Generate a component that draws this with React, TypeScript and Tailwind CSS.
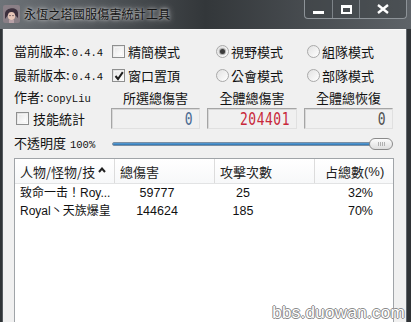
import React from 'react';

const cjk = "font-['Noto_Sans_CJK_TC','Noto_Sans_CJK_SC',sans-serif]";
const mono = "font-['Liberation_Mono',monospace]";

function Checkbox({ checked = false }: { checked?: boolean }) {
  return (
    <span className="relative inline-flex w-[13px] h-[13px] shrink-0 border border-[#8e8f8f] bg-gradient-to-br from-[#dcdcdc] to-[#ffffff]">
      <span className="m-[1px] flex-1 border border-[#f4f4f4] bg-gradient-to-br from-[#e8e8e8] to-white" />
      {checked && (
        <svg className="absolute left-[1px] top-[1px]" width="10" height="10" viewBox="0 0 10 10">
          <path d="M1.5 5 L4 8 L8.8 1.2" fill="none" stroke="#1f1f1f" strokeWidth="2" />
        </svg>
      )}
    </span>
  );
}

function Radio({ checked = false }: { checked?: boolean }) {
  return (
    <span className="inline-flex items-center justify-center w-[13px] h-[13px] shrink-0 rounded-full border border-[#a9a9a9] bg-gradient-to-br from-[#e2e2e2] to-white">
      {checked && <span className="w-[5px] h-[5px] rounded-full bg-[#3a3a3a] shadow-[0_0_1px_1px_rgba(90,90,90,0.5)]" />}
    </span>
  );
}

function Digits({ value, color }: { value: string; color: string }) {
  return (
    <div className="h-[21px] flex items-center justify-end pr-[6px] border border-[#a5a5a5] border-b-[#e0e0e0] border-r-[#e0e0e0] bg-[#f0f0f0] shadow-[inset_1px_1px_0_#d8d8d8]">
      <span className={"inline-block font-['DejaVu_Sans_Mono',monospace] text-[13px] leading-none scale-y-[1.35] tracking-[0.5px] " + color}>{value}</span>
    </div>
  );
}

function Avatar() {
  return (
    <svg width="17" height="18" viewBox="0 0 17 18">
      <rect x="0" y="0" width="17" height="18" rx="2" fill="#8a7f86" />
      <path d="M2 9 C2 2 15 1 15 8 L15 13 L12 10 L5 10 L2 14 Z" fill="#3b2f3c" />
      <ellipse cx="8.5" cy="11" rx="3.6" ry="4" fill="#e7c7b8" />
      <rect x="6" y="15" width="5" height="3" fill="#b9a2a8" />
      <circle cx="7" cy="10.6" r="0.7" fill="#3b2f3c" />
      <circle cx="10" cy="10.6" r="0.7" fill="#3b2f3c" />
    </svg>
  );
}

function TitleBar() {
  return (
    <div className="h-[29px] flex items-start bg-gradient-to-r from-[#6e7378] via-[#33373a] to-[#5e6368] relative">
      <div className="flex items-center gap-[4px] pl-[3px] pt-[5px]">
        <Avatar />
        <span className={cjk + " text-[12px] leading-none text-[#151515] tracking-[0.2px] [text-shadow:0_0_6px_rgba(230,230,230,0.9),0_0_3px_rgba(230,230,230,0.7)]"}>
          永恆之塔國服傷害統計工具
        </span>
      </div>
      <div className="ml-auto mr-[4px] flex h-[19px] border border-t-0 border-[#8d9398] rounded-b-[4px] bg-[#3f4448]/60">
        <div className="w-[28px] flex items-center justify-center border-r border-[#7d8388]">
          <span className="mt-[7px] w-[11px] h-[3px] bg-white" />
        </div>
        <div className="w-[27px] flex items-center justify-center border-r border-[#7d8388]">
          <span className="w-[11px] h-[9px] border-2 border-white border-t-[3px]" />
        </div>
        <div className="w-[46px] flex items-center justify-center">
          <svg width="12" height="10" viewBox="0 0 12 10">
            <path d="M1 1 L11 9 M11 1 L1 9" stroke="#fff" strokeWidth="2.4" />
          </svg>
        </div>
      </div>
    </div>
  );
}

const rows = [
  { name: '致命一击！Roy...', dmg: '59777', hits: '25', pct: '32%' },
  { name: 'Royal丶天族爆皇', dmg: '144624', hits: '185', pct: '70%' },
];

export default function App() {
  return (
    <div className="relative w-[411px] h-[322px] overflow-hidden flex flex-col bg-[#3a3e42] text-[#111]">
      <TitleBar />
      <div className="flex flex-1 min-h-0">
        <div className="w-[3px] bg-[#2f3336] border-r border-[#555a5e]" />
        <div className={cjk + " flex-1 flex flex-col bg-[#f0f0f0] border-t border-[#f8f8f8] pl-[11px] pt-[9px] text-[13px] leading-none"}>
          <div className="flex h-[24px] items-center">
            <div className="w-[98px] flex items-baseline">當前版本:<span className={mono + " text-[10.5px] ml-[2px]"}>0.4.4</span></div>
            <div className="w-[104px] flex items-center gap-[3px]"><Checkbox />精簡模式</div>
            <div className="w-[91px] flex items-center gap-[2px]"><Radio checked />視野模式</div>
            <div className="flex items-center gap-[2px]"><Radio />組隊模式</div>
          </div>
          <div className="flex h-[24px] items-center">
            <div className="w-[98px] flex items-baseline">最新版本:<span className={mono + " text-[10.5px] ml-[2px]"}>0.4.4</span></div>
            <div className="w-[104px] flex items-center gap-[3px]"><Checkbox checked />窗口置頂</div>
            <div className="w-[91px] flex items-center gap-[2px]"><Radio />公會模式</div>
            <div className="flex items-center gap-[2px]"><Radio />部隊模式</div>
          </div>
          <div className="flex h-[20px] items-center">
            <div className="w-[97px] flex items-baseline">作者:<span className={mono + " text-[10.5px] ml-[3px]"}>CopyLiu</span></div>
            <div className="w-[89px] text-center">所選總傷害</div>
            <div className="w-[90px] ml-[7px] text-center">全體總傷害</div>
            <div className="w-[89px] ml-[7px] text-center">全體總恢復</div>
          </div>
          <div className="flex h-[22px] items-center">
            <div className="w-[97px] flex items-center gap-[4px] pl-[2px]"><Checkbox />技能統計</div>
            <div className="w-[89px]"><Digits value="0" color="text-[#4a6a92]" /></div>
            <div className="w-[90px] ml-[7px]"><Digits value="204401" color="text-[#c8283a]" /></div>
            <div className="w-[89px] ml-[7px]"><Digits value="0" color="text-[#505050]" /></div>
          </div>
          <div className="flex h-[29px] items-center">
            <div className="w-[98px] flex items-baseline">不透明度<span className={mono + " text-[10.5px] ml-[4px]"}>100%</span></div>
            <div className="relative w-[281px] h-[12px]">
              <div className="absolute left-0 top-[4px] w-[265px] h-[4px] rounded-[2px] border border-[#7b8fa3] bg-gradient-to-b from-[#5aa0d8] to-[#2f74b0]" />
              <div className="absolute left-[257px] top-0 w-[24px] h-[12px] rounded-[6px] border border-[#8a8a8a] bg-gradient-to-b from-[#fcfcfc] to-[#dedede] flex items-center justify-center gap-[1px]">
                <span className="w-[1px] h-[4px] bg-[#b0b0b0]" />
                <span className="w-[1px] h-[4px] bg-[#b0b0b0]" />
                <span className="w-[1px] h-[4px] bg-[#b0b0b0]" />
                <span className="w-[1px] h-[4px] bg-[#b0b0b0]" />
              </div>
            </div>
          </div>
          <div className="w-[380px] flex-1 border border-[#a0a4a8] border-b-0 bg-white flex flex-col">
            <div className="flex h-[25px] border-b border-[#e2e3e4] bg-gradient-to-b from-white to-[#f7f8f9] text-[#222]">
              <div className="w-[100px] flex items-center pl-[5px] border-r border-[#dcdcdc] whitespace-nowrap">
                人物/怪物/技
                <svg className="ml-[3px] -mt-[2px]" width="8" height="6" viewBox="0 0 8 6">
                  <path d="M1 5 L4 1.5 L7 5" fill="none" stroke="#222" strokeWidth="2" />
                </svg>
              </div>
              <div className="w-[100px] flex items-center pl-[5px] border-r border-[#dcdcdc]">總傷害</div>
              <div className="w-[100px] flex items-center pl-[5px] border-r border-[#dcdcdc]">攻擊次數</div>
              <div className="flex-1 flex items-center pl-[10px]">
                占總數<span className="font-['Liberation_Sans',sans-serif] text-[13px]">(%)</span>
              </div>
            </div>
            {rows.map((r) => (
              <div key={r.name} className="flex h-[18px] items-center">
                <div className="w-[100px] pl-[5px] font-['Liberation_Sans','Noto_Sans_CJK_TC',sans-serif] text-[12px] whitespace-nowrap">{r.name}</div>
                <div className="w-[84px] text-center font-['Liberation_Sans',sans-serif] text-[12.5px]">{r.dmg}</div>
                <div className="w-[56px] ml-[16px] text-center font-['Liberation_Sans',sans-serif] text-[12.5px]">{r.hits}</div>
                <div className="w-[102px] text-right font-['Liberation_Sans',sans-serif] text-[12.5px]">{r.pct}</div>
              </div>
            ))}
          </div>
        </div>
        <div className="w-[5px] bg-[#2f3336] border-l border-[#60666b]" />
      </div>
      <div className="absolute right-[6px] bottom-[1px] font-['Liberation_Sans',sans-serif] text-[17px] leading-none text-white tracking-[0.3px] [text-shadow:1px_0_0_#8a8a8a,-1px_0_0_#8a8a8a,0_1px_0_#8a8a8a,0_-1px_0_#8a8a8a]">
        bbs.duowan.com
      </div>
    </div>
  );
}
